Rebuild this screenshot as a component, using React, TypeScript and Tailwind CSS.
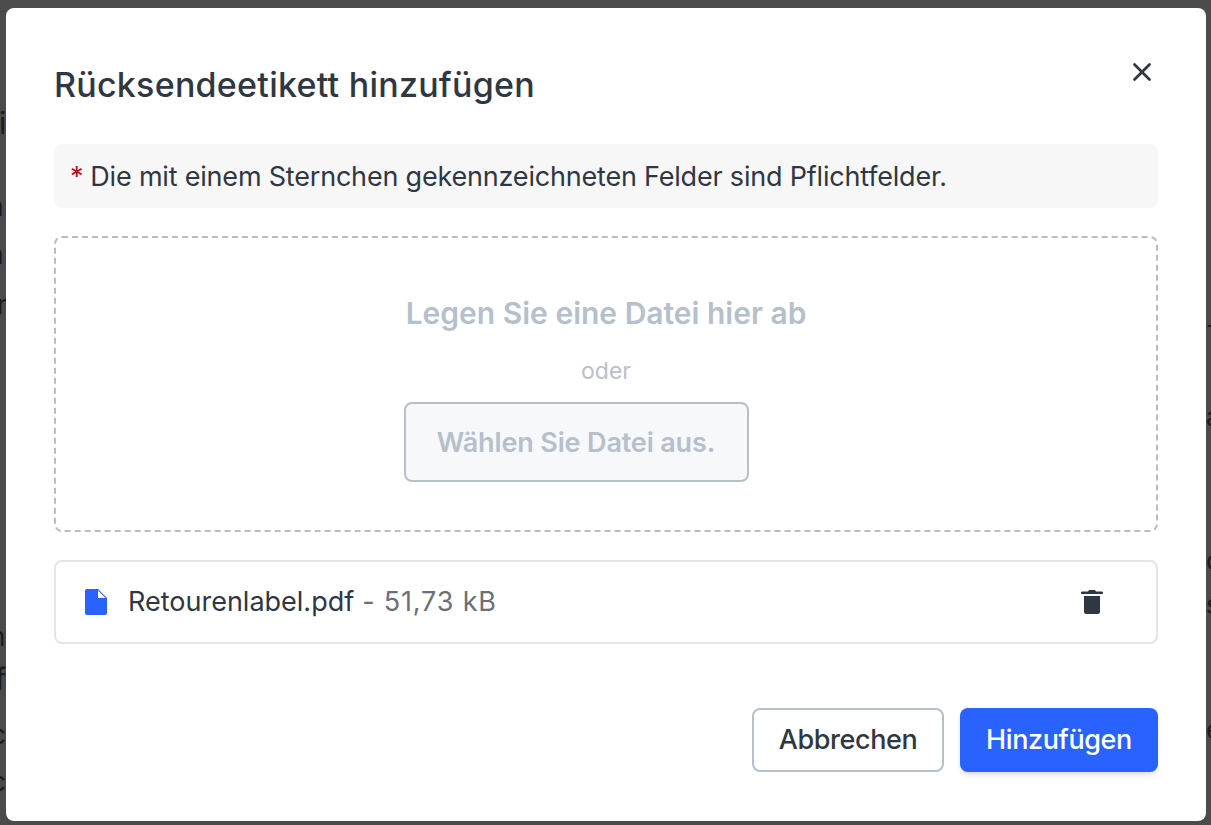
import { X } from 'lucide-react';

const edgeGlyphs = [
  { id: 1, text: 'i', className: 'top-[108px] left-[-1px] text-[30px]' },
  { id: 2, text: 'a', className: 'top-[194px] left-[-11px] text-[26px]' },
  { id: 3, text: 'a', className: 'top-[242px] left-[-11px] text-[26px]' },
  { id: 4, text: 'r', className: 'top-[292px] left-[-3px] text-[26px]' },
  { id: 5, text: 'n', className: 'top-[624px] left-[-10px] text-[26px]' },
  { id: 6, text: 'f', className: 'top-[664px] left-[-5px] text-[30px]' },
  { id: 7, text: 'c', className: 'top-[722px] left-[-9px] text-[26px]' },
  { id: 8, text: 'c', className: 'top-[769px] left-[-9px] text-[26px]' },
  { id: 9, text: '-', className: 'top-[312px] left-[1206px] text-[26px]' },
  { id: 10, text: 'a', className: 'top-[404px] left-[1206px] text-[26px]' },
  { id: 11, text: 'c', className: 'top-[548px] left-[1206px] text-[26px]' },
  { id: 12, text: 's', className: 'top-[592px] left-[1206px] text-[26px]' },
  { id: 13, text: 'e', className: 'top-[717px] left-[1206px] text-[26px]' },
];

function FileIcon() {
  return (
    <svg width="24" height="28" viewBox="0 0 24 28" className="shrink-0">
      <path d="M3 1h11l9 9v15a2 2 0 0 1-2 2H3a2 2 0 0 1-2-2V3a2 2 0 0 1 2-2z" fill="#2962ff" />
      <path d="M14 2.5 21.5 10H14z" fill="#fff" />
    </svg>
  );
}

function TrashIcon() {
  return (
    <svg width="22" height="26" viewBox="0 0 22 26" className="ml-auto shrink-0">
      <path d="M7 2.5 8 1h6l1 1.5h6a.9.9 0 0 1 0 2.5H1a.9.9 0 0 1 0-2.5z" fill="#2f3742" />
      <path d="M3 7h16v15.5a2.5 2.5 0 0 1-2.5 2.5h-11A2.5 2.5 0 0 1 3 22.5z" fill="#2f3742" />
    </svg>
  );
}

export default function App() {
  return (
    <div className="relative h-[825px] w-[1211px] overflow-hidden bg-[#4b4b4b] font-['Inter','Liberation_Sans',sans-serif] text-[#2f3742]">
      {edgeGlyphs.map(g => (
        <span key={g.id} className={`absolute leading-none text-[#1c1c1c] ${g.className}`}>
          {g.text}
        </span>
      ))}

      <div className="absolute left-[6px] top-[8px] flex h-[813px] w-[1200px] flex-col rounded-lg bg-white px-12 pt-12">
        <div className="flex items-start justify-between">
          <h2 className="text-[34px] font-medium leading-[58px] tracking-[0.25px]">Rücksendeetikett hinzufügen</h2>
          <button className="mr-[1px] mt-[1px] text-[#2f3742]">
            <X size={30} strokeWidth={2.2} />
          </button>
        </div>

        <div className="mt-[30px] flex h-16 items-center rounded-lg bg-[#f7f7f7] px-4 pt-[2px] text-[27px] tracking-[-0.2px]">
          <span className="mr-[7px] text-[#b3121d]">*</span>
          Die mit einem Sternchen gekennzeichneten Felder sind Pflichtfelder.
        </div>

        <div className="mt-7 flex h-[296px] flex-col items-center rounded-lg border-2 border-dashed border-[#bcbcbc] pt-[51px]">
          <div className="text-[30px] font-semibold leading-[48px] text-[#b5c0cb]">Legen Sie eine Datei hier ab</div>
          <div className="mt-[18px] text-[23px] leading-8 text-[#b8c0c8]">oder</div>
          <button className="mr-[60px] mt-[15px] flex h-20 w-[345px] items-center justify-center rounded-lg border-2 border-[#b5c0cb] bg-[#f7f8f9] pt-[2px] text-[27px] font-semibold tracking-[-0.15px] text-[#b5c0cb]">
            Wählen Sie Datei aus.
          </button>
        </div>

        <div className="mt-7 flex h-[84px] items-center rounded-lg border-2 border-[#e4e5e6] pl-7 pr-[53px] text-[27px]">
          <FileIcon />
          <span className="ml-5">Retourenlabel.pdf</span>
          <span className="ml-[8px] text-[#6b7075]">-</span>
          <span className="ml-[9px] tracking-[0.85px] text-[#6b7075]">51,73 kB</span>
          <TrashIcon />
        </div>

        <div className="mt-16 flex justify-end gap-4">
          <button className="h-16 w-[192px] rounded-lg border-2 border-[#b5c0cb] bg-white text-[27px] font-medium tracking-[-0.4px]">Abbrechen</button>
          <button className="h-16 w-[198px] rounded-lg bg-[#2962ff] text-[27px] font-medium tracking-[-0.4px] text-white shadow-md">Hinzufügen</button>
        </div>
      </div>
    </div>
  );
}
